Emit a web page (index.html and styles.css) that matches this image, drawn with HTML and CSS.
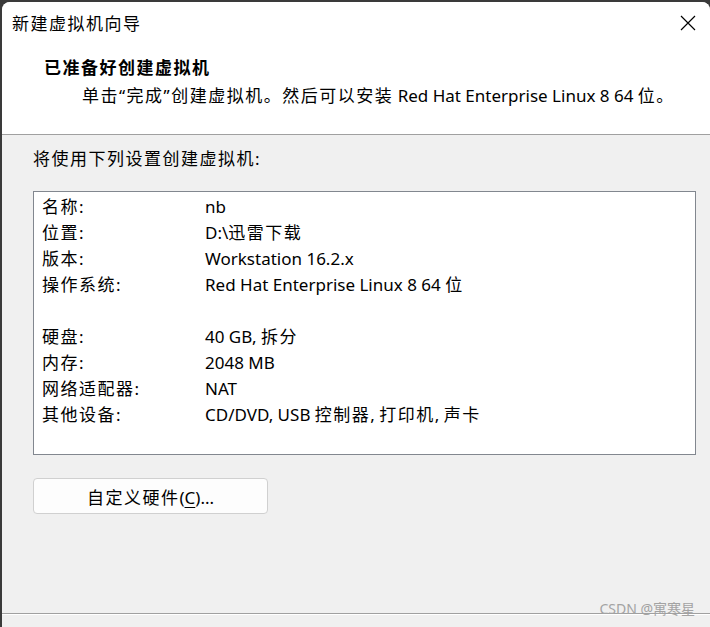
FILE: index.html
```html
<!DOCTYPE html>
<html lang="zh">

<head>
    <meta charset="UTF-8">
    <title>新建虚拟机向导</title>
    <link rel="stylesheet" href="styles.css">
</head>

<body>
    <div class="window">
        <div class="titlebar">
            <span class="title zh">新建虚拟机向导</span>
            <svg class="close" width="16" height="16" viewBox="0 0 16 16">
                <path d="M1 1 L15 15 M15 1 L1 15" stroke="#000" stroke-width="1.2" fill="none" />
            </svg>
        </div>

        <div class="header">
            <h1 class="zh">已准备好创建虚拟机</h1>
            <p><span class="zh">单击“完成”创建虚拟机。然后可以安装</span> Red Hat Enterprise Linux 8 64 <span class="zh">位。</span></p>
        </div>

        <div class="content">
            <div class="intro zh">将使用下列设置创建虚拟机:</div>

            <div class="summary">
                <div class="row"><span class="zh">名称:</span><span>nb</span></div>
                <div class="row"><span class="zh">位置:</span><span>D:\<span class="zh">迅雷下载</span></span></div>
                <div class="row"><span class="zh">版本:</span><span>Workstation 16.2.x</span></div>
                <div class="row"><span class="zh">操作系统:</span><span>Red Hat Enterprise Linux 8 64 <span class="zh">位</span></span></div>
                <div class="row"></div>
                <div class="row"><span class="zh">硬盘:</span><span>40 GB, <span class="zh">拆分</span></span></div>
                <div class="row"><span class="zh">内存:</span><span>2048 MB</span></div>
                <div class="row"><span class="zh">网络适配器:</span><span>NAT</span></div>
                <div class="row"><span class="zh">其他设备:</span><span>CD/DVD, USB <span class="zh">控制器</span>, <span class="zh">打印机</span>, <span class="zh">声卡</span></span></div>
            </div>

            <button class="custom"><span class="zh">自定义硬件</span>(<u>C</u>)...</button>
        </div>

        <div class="footer"></div>

        <div class="watermark">CSDN @寓寒星</div>
    </div>
</body>

</html>
```

FILE: styles.css
```css
* {
    padding: 0;
    margin: 0;
    box-sizing: border-box;
}

body {
    background: #3a3a3a;
    font-family: "Noto Sans", "Noto Sans CJK SC", sans-serif;
    font-size: 17px;
    color: #000;
    overflow: hidden;
}

/* 宋体的字距比较宽 */
.zh {
    letter-spacing: 1.5px;
}

.window {
    position: relative;
    margin: 2px 0 0 2px;
    width: 708px;
    height: 625px;
    background: #f0f0f0;
    border-radius: 8px 8px 0 0;
    overflow: hidden;

    display: flex;
    flex-direction: column;
}

.titlebar {
    height: 43px;
    background: white;
    display: flex;
    align-items: center;
    justify-content: space-between;
    padding: 0 14px 0 10px;
}

.title {
    margin-top: -2px;
}

.close {
    margin-top: -2px;
}

.header {
    height: 90px;
    background: white;
    border-bottom: 1px solid #a0a0a0;
    padding: 9px 0 0 42px;
}

.header h1 {
    font-size: 17px;
    font-weight: bold;
    line-height: 28px;
}

.header p {
    padding-left: 38px;
    line-height: 28px;
}

.content {
    flex: 1;
    padding: 11px 0 0 31px;
}

.intro {
    line-height: 26px;
}

.summary {
    margin-top: 19px;
    width: 663px;
    height: 264px;
    background: white;
    border: 1px solid #82878f;
    padding: 2px 0 0 8px;
}

.row {
    height: 26px;
    line-height: 26px;
    display: grid;
    grid-template-columns: 163px auto;
}

.custom {
    margin-top: 23px;
    width: 235px;
    height: 36px;
    background: #fdfdfd;
    border: 1px solid #d0d0d0;
    border-radius: 4px;
    font: inherit;
    color: #000;
}

.custom u {
    text-underline-offset: 3px;
}

.footer {
    height: 14px;
    border-top: 1px solid #a0a0a0;
    box-shadow: inset 0 1px 0 #ffffff;
}

.watermark {
    position: absolute;
    right: 15px;
    bottom: 9px;
    font-size: 14px;
    color: #a3a3a3;
}
```
